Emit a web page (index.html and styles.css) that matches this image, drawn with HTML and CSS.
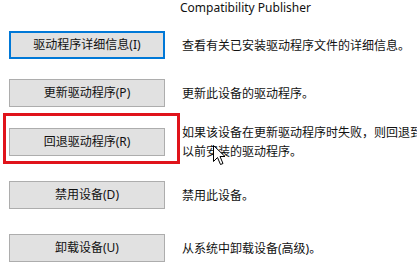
FILE: index.html
```html
<!DOCTYPE html>
<html lang="zh-CN">
<head>
<meta charset="utf-8">
<link rel="stylesheet" href="styles.css">
</head>
<body>
<div class="page">
  <div class="header">Compatibility Publisher</div>
  <div class="row r1">
    <button class="btn focused">驱动程序详细信息(I)</button>
    <div class="desc">查看有关已安装驱动程序文件的详细信息。</div>
  </div>
  <div class="row r2">
    <button class="btn">更新驱动程序(P)</button>
    <div class="desc">更新此设备的驱动程序。</div>
  </div>
  <div class="row r3">
    <button class="btn">回退驱动程序(R)</button>
    <div class="desc wrap">如果该设备在更新驱动程序时失败，则回退到以前安装的驱动程序。</div>
  </div>
  <div class="row r4">
    <button class="btn">禁用设备(D)</button>
    <div class="desc">禁用此设备。</div>
  </div>
  <div class="row r5">
    <button class="btn">卸载设备(U)</button>
    <div class="desc">从系统中卸载设备(高级)。</div>
  </div>
  <div class="highlight"></div>
  <svg class="cursor" width="13" height="21" viewBox="0 0 13 21">
    <path d="M0.5 0.5 L0.5 16.5 L4.5 12.5 L7.5 19.5 L10 18.5 L7 11.5 L12 11.5 Z" fill="#fff" stroke="#000" stroke-width="1" stroke-linejoin="miter"/>
  </svg>
</div>
</body>
</html>
```
FILE: styles.css
```css
html, body {
  margin: 0;
  padding: 0;
  background: #fff;
  overflow: hidden;
}
.page {
  position: relative;
  width: 417px;
  height: 280px;
  overflow: hidden;
  font-family: "Noto Sans", "Noto Sans CJK SC", sans-serif;
  font-size: 12px;
  color: #111;
}
.header {
  padding-left: 180px;
  height: 16px;
  line-height: 16px;
  white-space: nowrap;
}
.row {
  display: flex;
  align-items: center;
  padding-left: 9px;
}
.r1 { margin-top: 15px; }
.r2 { margin-top: 20px; }
.r3 { margin-top: 16px; }
.r4 { margin-top: 20px; }
.r5 { margin-top: 25px; }
.btn {
  box-sizing: border-box;
  width: 156px;
  height: 28px;
  flex: none;
  margin: 0;
  padding: 0;
  background: #e1e1e1;
  border: 1px solid #adadad;
  font-family: "Noto Sans", "Noto Sans CJK SC", sans-serif;
  font-size: 12px;
  color: #111;
  line-height: 26px;
  text-align: center;
}
.btn.focused {
  border: 2px solid #0078d7;
  line-height: 24px;
}
.desc {
  margin-left: 17px;
  white-space: nowrap;
  line-height: 19px;
}
.desc.wrap {
  white-space: normal;
  width: 242px;
  flex: none;
}
.highlight {
  position: absolute;
  left: 3px;
  top: 113px;
  width: 171px;
  height: 45px;
  border: 3px solid #e0131b;
}
.cursor {
  position: absolute;
  left: 213px;
  top: 145px;
}
```
